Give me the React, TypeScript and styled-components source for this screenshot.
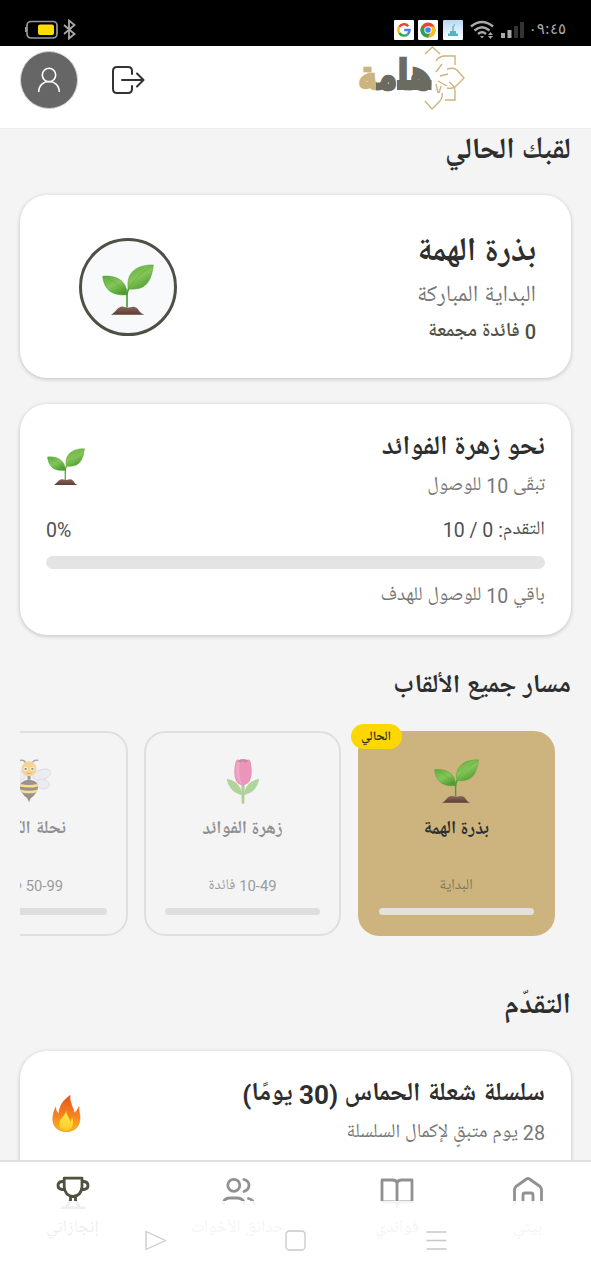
import React from "react";
import styled, { createGlobalStyle } from "styled-components";

const Global = createGlobalStyle`
  * { box-sizing: border-box; }
  body { margin: 0; background: #f4f4f4; font-family: Roboto, "Noto Naskh Arabic UI", "Noto Naskh Arabic", "DejaVu Sans", sans-serif; }
`;

const Screen = styled.div`
  width: 591px;
  height: 1280px;
  display: flex;
  flex-direction: column;
  overflow: hidden;
  background: #f4f4f4;
  color: #2e2e2e;
`;

const StatusBar = styled.div`
  height: 46px;
  flex: none;
  background: #000;
  display: flex;
  justify-content: space-between;
  padding: 18px 25px 0 25px;
`;

const StatusGroup = styled.div<{ $gap: number }>`
  display: flex;
  align-items: center;
  height: 23px;
  gap: ${(p) => p.$gap}px;
`;

const AppTile = styled.div<{ $bg: string }>`
  width: 20px;
  height: 20px;
  border-radius: 1px;
  background: ${(p) => p.$bg};
  display: flex;
  align-items: center;
  justify-content: center;
`;

const Clock = styled.div`
  color: #a9a9a9;
  font-family: "DejaVu Sans", sans-serif;
  font-size: 15px;
  line-height: 20px;
  height: 22px;
  width: 36px;
  display: flex;
  justify-content: flex-end;
  white-space: nowrap;
`;

const Header = styled.header`
  height: 82px;
  flex: none;
  background: #fff;
  display: flex;
  align-items: flex-start;
  justify-content: space-between;
  padding: 0 126px 0 20px;
`;

const HeaderActions = styled.div`
  display: flex;
  align-items: center;
  gap: 32px;
  padding-top: 5px;
`;

const Avatar = styled.div`
  width: 58px;
  height: 58px;
  border-radius: 50%;
  border: 1px solid #cfcfcf;
  background: #666;
  display: flex;
  align-items: center;
  justify-content: center;
`;

const Content = styled.main`
  flex: 1;
  min-height: 0;
  overflow: hidden;
  padding: 0 20px;
  direction: rtl;
  border-top: 1px solid #eee;
`;

const Text = styled.div<{ $size: number; $lh: number; $color?: string; $weight?: number }>`
  font-size: ${(p) => p.$size}px;
  line-height: ${(p) => p.$lh}px;
  height: ${(p) => p.$lh}px;
  font-weight: ${(p) => p.$weight ?? 400};
  color: ${(p) => p.$color ?? "#2e2e2e"};
  white-space: nowrap;
`;

const Digits = styled.span`
  font-weight: 500;
`;

const SectionTitle = styled(Text).attrs({ as: "h2" })<{ $top: number; $bottom: number }>`
  margin: ${(p) => p.$top}px 0 ${(p) => p.$bottom}px;
`;

const Card = styled.section<{ $h: number; $pad: string }>`
  height: ${(p) => p.$h}px;
  padding: ${(p) => p.$pad};
  background: #fff;
  border-radius: 27px;
  box-shadow: 0 1px 4px rgba(0, 0, 0, 0.22);
`;

const HeroCard = styled(Card)`
  display: flex;
  justify-content: space-between;
  align-items: flex-start;
  margin-bottom: 26px;
`;

const Medal = styled.div`
  width: 98px;
  height: 98px;
  margin-top: 3px;
  border: 3px solid #4f4f45;
  border-radius: 50%;
  background: #f7f9fb;
  display: flex;
  align-items: center;
  justify-content: center;
  padding-top: 6px;
`;

const Row = styled.div`
  display: flex;
  justify-content: space-between;
  align-items: flex-start;
`;

const IconSlot = styled.div<{ $m: string }>`
  margin: ${(p) => p.$m};
  display: flex;
`;

const Bar = styled.div<{ $h: number; $color: string; $m?: string }>`
  align-self: stretch;
  height: ${(p) => p.$h}px;
  border-radius: ${(p) => p.$h / 2}px;
  background: ${(p) => p.$color};
  margin: ${(p) => p.$m ?? "0"};
`;

const Track = styled.div`
  display: flex;
  gap: 16.5px;
  height: 219px;
  padding: 10px 16.5px 0 0;
  overflow: hidden;
`;

const TitleCard = styled.div<{ $active?: boolean }>`
  position: relative;
  flex: none;
  width: 197px;
  height: 205px;
  border-radius: 21px;
  border: 2px solid ${(p) => (p.$active ? "#cdb47f" : "#cbcbcb")};
  background: ${(p) => (p.$active ? "#cdb47f" : "#f4f4f4")};
  opacity: ${(p) => (p.$active ? 1 : 0.5)};
  padding: 25px 19px 0;
  display: flex;
  flex-direction: column;
  align-items: center;
`;

const EmojiBox = styled.div`
  height: 46px;
  display: flex;
  align-items: center;
`;

const Badge = styled.div`
  position: absolute;
  left: -9px;
  top: -9px;
  width: 51px;
  height: 25px;
  border-radius: 13px;
  background: #ffd700;
  display: flex;
  justify-content: center;
  padding-top: 3px;
`;

const TabBar = styled.nav`
  position: relative;
  height: 120px;
  flex: none;
  background: #fff;
  border-top: 2px solid #e0e0e0;
  direction: rtl;
`;

const Tabs = styled.div`
  display: flex;
  justify-content: space-between;
  padding: 13px 45.5px 0 42.5px;
`;

const Tab = styled.div<{ $w: number; $color: string }>`
  width: ${(p) => p.$w}px;
  color: ${(p) => p.$color};
  display: flex;
  flex-direction: column;
  align-items: center;
  gap: 2px;
`;

const SystemNav = styled.div`
  position: absolute;
  left: 0;
  right: 0;
  top: 39px;
  bottom: 0;
  background: rgba(255, 255, 255, 0.9);
  direction: ltr;
  display: flex;
  justify-content: space-between;
  align-items: flex-start;
  padding: 28px 143px 0 144px;
`;

const Seedling = ({ size }: { size: number }) => (
  <svg width={size} height={size} viewBox="0 0 156 156">
    <defs>
      <linearGradient id="leaf" x1="0" y1="0" x2="0.6" y2="1">
        <stop offset="0" stopColor="#5fae3c" />
        <stop offset="0.55" stopColor="#85c558" />
        <stop offset="1" stopColor="#4f9e30" />
      </linearGradient>
      <linearGradient id="soil" x1="0" y1="0" x2="0" y2="1">
        <stop offset="0" stopColor="#8d675a" />
        <stop offset="1" stopColor="#5a3d36" />
      </linearGradient>
    </defs>
    <path d="M27 152C42 146 46 126 64 128L76 131L95 128C112 130 108 146 127 152Z" fill="url(#soil)" />
    <path d="M75 131V94C75 86 77 80 80 74" fill="none" stroke="#4f9e30" strokeWidth="5" />
    <path d="M2 37C40 32 76 50 75 92C32 97 6 78 2 37Z" fill="url(#leaf)" stroke="#4f9a35" strokeWidth="1.5" />
    <path d="M154 3C104 1 70 28 79 75C134 80 148 50 154 3Z" fill="url(#leaf)" stroke="#4f9a35" strokeWidth="1.5" />
    <path d="M4 38C30 48 56 64 74 91M152 5C125 21 98 43 80 73" fill="none" stroke="#4b9431" strokeWidth="1.5" opacity="0.65" />
  </svg>
);

const Tulip = () => (
  <svg width="34" height="46" viewBox="0 0 102 138">
    <path d="M46 75H56L55 136Q51 139 47 136Z" fill="#69ad3c" />
    <path d="M2 63C27 66 45 81 49 112C25 106 9 93 2 63Z" fill="#72b345" />
    <path d="M100 63C75 66 57 81 53 112C77 106 93 93 100 63Z" fill="#72b345" />
    <path d="M30 8Q36 1 43 8Q50 0 59 8Q68 1 73 9C80 33 82 80 51 82C20 80 22 33 30 8Z" fill="#e2387f" />
    <path d="M33 12C25 45 31 70 48 78C38 55 39 30 43 12Z" fill="#ee5c99" />
    <path d="M36 9L43 14L51 9L59 14L67 9L59 4H44Z" fill="#96205c" />
  </svg>
);

const Bee = () => (
  <svg width="44" height="44" viewBox="0 0 130 128">
    <g fill="#e2e6ec" stroke="#b5bbc5" strokeWidth="2">
      <ellipse cx="103" cy="45" rx="28" ry="15" transform="rotate(-18 103 45)" />
      <ellipse cx="106" cy="73" rx="19" ry="14" transform="rotate(12 106 73)" />
      <ellipse cx="27" cy="45" rx="28" ry="15" transform="rotate(18 27 45)" />
      <ellipse cx="24" cy="73" rx="19" ry="14" transform="rotate(-12 24 73)" />
    </g>
    <path d="M57 14C53 4 47 1 39 3M73 14C77 4 83 1 91 3" fill="none" stroke="#55506a" strokeWidth="4" strokeLinecap="round" />
    <path d="M65 44V60" stroke="#4a3a30" strokeWidth="9" />
    <circle cx="65" cy="28" r="22" fill="#fbb62f" />
    <circle cx="55" cy="28" r="6" fill="#fff" />
    <circle cx="75" cy="28" r="6" fill="#fff" />
    <circle cx="55" cy="28" r="3.5" fill="#333" />
    <circle cx="75" cy="28" r="3.5" fill="#333" />
    <path d="M58 40Q65 45 72 40" fill="none" stroke="#7d4c15" strokeWidth="2" />
    <path d="M65 60C88 61 98 77 88 96Q80 109 70 115L65 127L60 115Q50 109 42 96C32 77 42 61 65 60Z" fill="#443229" />
    <path d="M40 73Q65 79 90 73L92 80Q65 87 38 80ZM39 89Q65 96 91 89L87 97Q65 104 43 97Z" fill="#ffcc33" />
  </svg>
);

const Flame = () => (
  <svg width="29" height="37" viewBox="0 0 86 111">
    <defs>
      <linearGradient id="fire" x1="0" y1="0" x2="0" y2="1">
        <stop offset="0" stopColor="#e6531d" />
        <stop offset="0.55" stopColor="#f5831f" />
        <stop offset="1" stopColor="#fbb91b" />
      </linearGradient>
      <linearGradient id="core" x1="0" y1="0" x2="0" y2="1">
        <stop offset="0" stopColor="#fff04d" />
        <stop offset="1" stopColor="#fdca28" />
      </linearGradient>
    </defs>
    <path d="M54 1C51 20 63 35 66 54C71 52 75 45 81 35C78 49 86 58 83 76C80 98 64 110 43 110C19 110 3 96 2 75C1 60 6 49 10 37C12 48 15 53 20 56C22 30 35 14 54 1Z" fill="url(#fire)" stroke="#df6d1c" strokeWidth="1.5" />
    <path d="M42 44C41 62 54 67 54 80C59 76 58 70 60 67C68 87 59 105 43 106C24 106 17 91 24 76C31 64 42 57 42 44Z" fill="url(#core)" />
  </svg>
);

const Logo = () => (
  <svg width="108" height="66" viewBox="0 0 108 66">
    <defs>
      <linearGradient id="word" gradientUnits="userSpaceOnUse" x1="0" x2="76" y1="0" y2="0">
        <stop offset="0.25" stopColor="#cdb47f" />
        <stop offset="0.25" stopColor="#6b6b62" />
      </linearGradient>
    </defs>
    <text
      transform="translate(38 42.500) scale(1 1.15)"
      textAnchor="middle"
      direction="rtl"
      fontFamily="DejaVu Sans, sans-serif"
      fontSize="36"
      fontWeight="700"
      textLength="74"
      lengthAdjust="spacingAndGlyphs"
      fill="url(#wordShifted)"
      stroke="url(#wordShifted)"
      strokeWidth="2"
    >
      هامة
    </text>
    <linearGradient id="wordShifted" href="#word" x1="-38" x2="38" y1="0" y2="0" />
    <path d="M40 34H74.500V44H40Z" fill="#6b6b62" />
    <g fill="none" stroke="#cdb47f" strokeWidth="1.4">
      <path d="M68 8L75.500 1L83 8" />
      <path d="M79 15Q82 10 88 10H98V19" />
      <path d="M79 26L85 18M83 30L91 28M81 35L90 40M79 38L81 47M82 47L84 40" />
      <path d="M90 23Q97 21 100 24L107 32L98 41Q94 43 90 42" />
      <path d="M92 36Q98 40 98 45V54H88" />
      <path d="M85 47Q86 52 82 56L75 63L68 55" />
    </g>
  </svg>
);

const iconProps = { fill: "none", stroke: "currentColor", strokeLinecap: "round" as const, strokeLinejoin: "round" as const };

const tabs = [
  { label: "بيتي", w: 36, color: "#919191", icon: <path d="M2.500 28V13.500Q2.500 12 4 10.500L14.500 3Q16 2 17.500 3L28 10.500Q29.500 12 29.500 13.500V28M11 27V19Q11 17 13 17H19Q21 17 21 19V27" /> },
  { label: "فوائدي", w: 49, color: "#919191", icon: <path d="M16 8Q16 4 11 4H1V26H12Q16 26 16 30Q16 26 20 26H31V4H21Q16 4 16 8V29" /> },
  { label: "حدائق الأخوات", w: 94, color: "#919191", icon: <path d="M1.500 28V26Q3 22 8 22H15Q20 22 22 26V28M11.800 3.300A6 6 0 1 0 11.800 15.300A6 6 0 1 0 11.800 3.300M22 3.500Q27 5 27 9.300T22 15.500M26.500 22.500Q31 23.500 32 28" /> },
  { label: "إنجازاتي", w: 60, color: "#50503f", icon: <path d="M7.200 2.200H25V11Q24 20 16 20.500Q8 20 7.200 11ZM7.200 5.500H5Q1 6 1 9.500Q1 13 5 13.500H7.500M25 5.500H27Q31 6 31 9.500Q31 13 27 13.500H24.700M13.500 21V24.500L10 30M18.500 21V24.500L22 30M5 32H27" /> },
];

export default function App() {
  return (
    <Screen>
      <Global />
      <StatusBar>
        <StatusGroup $gap={4}>
          <svg width="34" height="20" viewBox="0 0 34 20">
            <rect x="2" y="1.5" width="30" height="16.5" rx="4" fill="none" stroke="#999" strokeWidth="1.7" />
            <path d="M1 7V12" stroke="#999" strokeWidth="2" />
            <rect x="13" y="4.5" width="16" height="10.5" rx="2" fill="#ffdc00" />
          </svg>
          <svg width="13" height="21" viewBox="0 0 13 21" fill="none" stroke="#aaa" strokeWidth="1.8">
            <path d="M1 6L11.5 15L6 19.5V1.5L11.5 6L1 15" />
          </svg>
        </StatusGroup>
        <StatusGroup $gap={4.5}>
          <AppTile $bg="#fff">
            <svg width="14" height="14" viewBox="0 0 14 14" fill="none" strokeWidth="2.4">
              <path d="M11.3 3.2A5.6 5.6 0 0 0 2.3 4" stroke="#ea4335" />
              <path d="M2.3 4A5.6 5.6 0 0 0 2.3 10" stroke="#fbbc05" />
              <path d="M2.3 10A5.6 5.6 0 0 0 10.6 11.3" stroke="#34a853" />
              <path d="M10.6 11.3A5.6 5.6 0 0 0 12.6 7H7.2" stroke="#4285f4" />
            </svg>
          </AppTile>
          <AppTile $bg="#fff">
            <svg width="16" height="16" viewBox="0 0 16 16">
              <circle cx="8" cy="8" r="7.5" fill="#ea4335" />
              <path d="M8 8L1.5 4.2A7.5 7.5 0 0 0 8 15.5L11 9Z" fill="#2da44e" />
              <path d="M8 15.5A7.5 7.5 0 0 0 14.5 4.5H8L11 9.5Z" fill="#fbc116" />
              <circle cx="8" cy="8" r="3.7" fill="#fff" />
              <circle cx="8" cy="8" r="2.8" fill="#4285f4" />
            </svg>
          </AppTile>
          <AppTile $bg="linear-gradient(#b9d9f3, #fff)">
            <svg width="14" height="14" viewBox="0 0 14 14" fill="#55b3c4">
              <path d="M2 10.500H12V13H2ZM4 8H10V10.500H4ZM6.300 3H7.700V8H6.300ZM7 2L9 1V3Z" />
            </svg>
          </AppTile>
          <svg width="29" height="20" viewBox="0 0 29 20" fill="none" stroke="#aaa" strokeWidth="2.4">
            <path d="M4 6.5Q15 -2.5 26 6.5M7.5 10.5Q15 4 22.5 10.5M11 14Q15 10.7 19 14" />
            <path d="M13 16H17L15 18.5Z" fill="#aaa" stroke="none" />
            <path d="M21 15L23.5 12L26 15ZM21 16L23.5 19L26 16Z" fill="#aaa" stroke="none" />
          </svg>
          <svg width="25" height="18" viewBox="1 0 25 18">
            <rect x="1" y="12" width="4" height="5" fill="#aaa" />
            <rect x="7.5" y="9" width="4" height="8" fill="#aaa" />
            <rect x="14" y="5" width="4" height="12" fill="#333" />
            <rect x="20" y="1" width="4" height="16" fill="#333" />
          </svg>
          <Clock>٠٩:٤٥</Clock>
        </StatusGroup>
      </StatusBar>

      <Header>
        <HeaderActions>
          <Avatar>
            <svg width="24" height="26" viewBox="0 0 24 26" fill="none" stroke="#fff" strokeWidth="1.6">
              <circle cx="12" cy="8" r="6.7" />
              <path d="M1.7 25C1.7 11 22.3 11 22.3 25" />
            </svg>
          </Avatar>
          <svg width="35" height="30" viewBox="0 0 35 30" fill="none" stroke="#333" strokeWidth="2" strokeLinecap="round" strokeLinejoin="round">
            <path d="M22 9V6Q22 2 18 2H7Q3 2 3 6V24Q3 28 7 28H18Q22 28 22 24V21M12 15H33M27 8.5L33.5 15L27 21.5" />
          </svg>
        </HeaderActions>
        <Logo />
      </Header>

      <Content>
        <SectionTitle $size={29.5} $lh={36} $weight={700} $top={5} $bottom={25}>لقبك الحالي</SectionTitle>

        <HeroCard $h={183} $pad="40px 35px 0 59px">
          <div>
            <Text $size={33} $lh={38} $weight={700}>بذرة الهمة</Text>
            <Text $size={23} $lh={48} $color="#767676">البداية المباركة</Text>
            <Text $size={20} $lh={23} $weight={600} $color="#4f4f45"><Digits>0</Digits> فائدة مجمعة</Text>
          </div>
          <Medal><Seedling size={52} /></Medal>
        </HeroCard>

        <Card $h={231} $pad="26px 26px 0 26px">
          <Row>
            <div>
              <Text $size={26.8} $lh={38} $weight={700}>نحو زهرة الفوائد</Text>
              <Text $size={19.5} $lh={38} $color="#767676">تبقّى 10 للوصول</Text>
            </div>
            <IconSlot $m="18px 0 0 1px"><Seedling size={38} /></IconSlot>
          </Row>
          <Row>
            <Text $size={19.5} $lh={49} $color="#505050">التقدم: 0 / 10</Text>
            <Text $size={19.5} $lh={50} $color="#505050">0%</Text>
          </Row>
          <Bar $h={13} $color="#e4e4e4" $m="0 0 10px" />
          <Text $size={19.5} $lh={36} $color="#767676">باقي 10 للوصول للهدف</Text>
        </Card>

        <SectionTitle $size={26.2} $lh={36} $weight={700} $top={34} $bottom={16}>مسار جميع الألقاب</SectionTitle>

        <Track>
          <TitleCard $active>
            <EmojiBox><Seedling size={45} /></EmojiBox>
            <Text $size={18.2} $lh={51} $weight={700}>بذرة الهمة</Text>
            <Text $size={14.8} $lh={63} $color="#857654">البداية</Text>
            <Bar $h={7} $color="#e2e2da" $m="-10px 0 0" />
            <Badge><Text $size={13} $lh={22} $weight={600}>الحالي</Text></Badge>
          </TitleCard>
          <TitleCard>
            <EmojiBox><Tulip /></EmojiBox>
            <Text $size={18.2} $lh={51} $weight={700}>زهرة الفوائد</Text>
            <Text $size={14.8} $lh={63} $color="#444">10-49 فائدة</Text>
            <Bar $h={7} $color="#c9c9c9" $m="-10px 0 0" />
          </TitleCard>
          <TitleCard>
            <EmojiBox><Bee /></EmojiBox>
            <Text $size={18.2} $lh={51} $weight={700}>نحلة الكنوز</Text>
            <Text $size={14.8} $lh={63} $color="#444">50-99 فائدة</Text>
            <Bar $h={7} $color="#c9c9c9" $m="-10px 0 0" />
          </TitleCard>
        </Track>

        <SectionTitle $size={29.5} $lh={36} $weight={700} $top={49} $bottom={26}>التقدّم</SectionTitle>

        <Card $h={231} $pad="25px 26px 0 32px">
          <Row>
            <div>
              <Text $size={26} $lh={38} $weight={700}>سلسلة شعلة الحماس (30 يومًا)</Text>
              <Text $size={19.7} $lh={40} $color="#767676">28 يوم متبقٍ لإكمال السلسلة</Text>
            </div>
            <IconSlot $m="19px 0 0 0"><Flame /></IconSlot>
          </Row>
        </Card>
      </Content>

      <TabBar>
        <Tabs>
          {tabs.map((t) => (
            <Tab key={t.label} $w={t.w} $color={t.color}>
              <svg width="34" height="34" viewBox="-1 -1 34 34" strokeWidth={2.8} {...iconProps}>{t.icon}</svg>
              <Text $size={17.5} $lh={34} $color={t.color}>{t.label}</Text>
            </Tab>
          ))}
        </Tabs>
        <SystemNav>
          <svg width="23" height="23" viewBox="0 0 23 23" fill="none" stroke="#c8c8c8" strokeWidth="1.3" strokeLinejoin="round"><path d="M2 2.5V20.5L21.5 11.5Z" /></svg>
          <svg width="23" height="23" viewBox="1 0 23 23" fill="none" stroke="#c8c8c8" strokeWidth="1.3"><rect x="2" y="2" width="19" height="19" rx="3.5" /></svg>
          <svg width="23" height="23" viewBox="0 0 23 23" fill="none" stroke="#c8c8c8" strokeWidth="1.3"><path d="M1.5 3H21.5M1.5 11.5H21.5M1.5 20H21.5" /></svg>
        </SystemNav>
      </TabBar>
    </Screen>
  );
}
